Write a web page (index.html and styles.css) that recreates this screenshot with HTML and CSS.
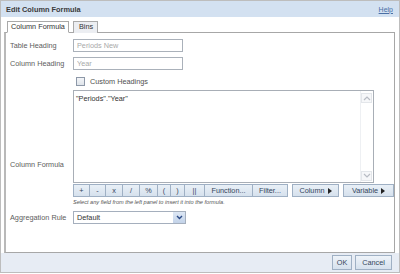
FILE: index.html
```html
<!DOCTYPE html>
<html lang="en">
  <head>
    <meta charset="UTF-8" />
    <title>Edit Column Formula</title>
    <link rel="stylesheet" href="styles.css">
  </head>
  <body>
    <div class="dialog">
      <div class="titlebar">
        <span class="title">Edit Column Formula</span>
        <a class="help" href="#">Help</a>
      </div>
      <div class="tabs">
        <span class="tab active">Column Formula</span>
        <span class="tab">Bins</span>
      </div>
      <div class="panel">
        <div class="row first">
          <span class="label">Table Heading</span>
          <input class="field" type="text" value="Periods New" />
        </div>
        <div class="row">
          <span class="label">Column Heading</span>
          <input class="field" type="text" value="Year" />
        </div>
        <div class="row check">
          <span class="label"></span>
          <input class="box" type="checkbox" />
          <span class="checktext">Custom Headings</span>
        </div>
        <div class="row formula">
          <span class="label formula-label">Column Formula</span>
          <div class="formula-col">
            <div class="textarea">
              <div class="text">"Periods"."Year"</div>
              <div class="scrollbar">
                <span class="arrow">
                  <svg width="8" height="6" viewBox="0 0 8 6"><path d="M1 5 L4 2 L7 5" fill="none" stroke="#b8bcc4" stroke-width="1.2"/></svg>
                </span>
                <span class="arrow">
                  <svg width="8" height="6" viewBox="0 0 8 6"><path d="M1 1 L4 4 L7 1" fill="none" stroke="#b8bcc4" stroke-width="1.2"/></svg>
                </span>
              </div>
            </div>
            <div class="ops">
              <button class="op w16">+</button>
              <button class="op w16">-</button>
              <button class="op w17">x</button>
              <button class="op w17">/</button>
              <button class="op w18">%</button>
              <button class="op w13">(</button>
              <button class="op w14">)</button>
              <button class="op w20">||</button>
              <button class="op w48">Function...</button>
              <button class="op w35">Filter...</button>
              <button class="op menu w47">Column <svg width="4" height="6" viewBox="0 0 4 6"><path d="M0 0 L4 3 L0 6 Z" fill="#222"/></svg></button>
              <button class="op menu w51">Variable <svg width="4" height="6" viewBox="0 0 4 6"><path d="M0 0 L4 3 L0 6 Z" fill="#222"/></svg></button>
            </div>
            <div class="hint">Select any field from the left panel to insert it into the formula.</div>
          </div>
        </div>
        <div class="row agg">
          <span class="label">Aggregation Rule</span>
          <div class="select">
            <span>Default</span>
            <span class="drop">
              <svg width="7" height="5" viewBox="0 0 7 5"><path d="M1 1 L3.5 3.5 L6 1" fill="none" stroke="#2b4a86" stroke-width="1.4"/></svg>
            </span>
          </div>
        </div>
      </div>
      <div class="footer">
        <button class="btn ok">OK</button>
        <button class="btn cancel">Cancel</button>
      </div>
    </div>
  </body>
</html>
```

FILE: styles.css
```css
* {
  margin: 0;
  padding: 0;
  box-sizing: border-box;
}
body {
  font-family: "Liberation Sans", Arial, sans-serif;
  font-size: 7.3px;
  color: #555;
  background: #fff;
}
.dialog {
  width: 400px;
  height: 273px;
  border: 1px solid #bdbdbd;
  display: flex;
  flex-direction: column;
}
/* thanh tiêu đề */
.titlebar {
  height: 16px;
  background: #d3e1f1;
  display: flex;
  justify-content: space-between;
  align-items: center;
  padding: 0 6px 0 5px;
}
.title {
  font-weight: bold;
  color: #3b3b3b;
  font-size: 7.4px;
}
.help {
  color: #4a6fa5;
  font-size: 7px;
}
/* tab */
.tabs {
  display: flex;
  gap: 4px;
  padding: 4px 0 0 6px;
  height: 16px;
  position: relative;
  z-index: 1;
}
.tab {
  height: 12px;
  line-height: 10px;
  padding: 0 3px;
  border: 1px solid #a9a9a9;
  border-bottom: none;
  background: #eceef2;
  color: #333;
}
.tab.active {
  background: #fff;
  height: 12px;
  width: 62px;
  border-bottom: 1px solid #fff;
}
.tab:last-child {
  width: 25px;
  padding-left: 5px;
}
.panel {
  height: 221px;
  margin: -1px 4px 0 3px;
  border: 1px solid #a7a7a7;
  border-left: 2px solid #b9b9b9;
  padding: 0 1px 0 4px;
}
.row {
  display: flex;
  align-items: center;
  margin-top: 5px;
}
.row.first {
  margin-top: 6px;
}
.label {
  width: 63px;
  flex: none;
  color: #5d5d5d;
}
.field {
  width: 110px;
  height: 13px;
  border: 1px solid #aab1ba;
  padding: 0 3px;
  font-family: inherit;
  font-size: 7.3px;
  color: #a9a9a9;
  outline: none;
}
.row.check {
  margin-top: 6px;
  height: 10px;
}
.box {
  appearance: none;
  width: 9px;
  height: 9px;
  border: 1px solid #8d98a8;
  background: linear-gradient(#f3f5f8, #dfe4ea);
  margin: 0 5px 0 3px;
}
.checktext {
  color: #4f4f4f;
}
.row.formula {
  align-items: flex-start;
  margin-top: 4px;
}
.formula-label {
  padding-top: 70px;
}
.formula-col {
  flex: 1;
}
.textarea {
  width: 301px;
  height: 93px;
  border: 1px solid #a8aeb6;
  display: flex;
}
.text {
  flex: 1;
  padding: 3px 2px;
  color: #333;
}
.scrollbar {
  width: 13px;
  border-left: 1px solid #eef0f3;
  display: flex;
  flex-direction: column;
  justify-content: space-between;
  padding: 2px 1px 1px 0;
}
.arrow {
  display: flex;
  align-items: center;
  justify-content: center;
  height: 10px;
  border: 1px solid #e3e6ea;
  background: #f6f7f9;
}
.ops {
  display: flex;
  margin-top: 1px;
}
.op {
  height: 13px;
  border: 1px solid #9fb0c4;
  background: linear-gradient(#e9f0f7, #d6e1ed);
  font-family: inherit;
  font-size: 7.3px;
  color: #34465c;
  margin-right: -1px;
}
.op.menu {
  display: flex;
  align-items: center;
  justify-content: center;
  gap: 3px;
}
.w13 { width: 14px; }
.w14 { width: 15px; }
.w16 { width: 17px; }
.w17 { width: 18px; }
.w18 { width: 19px; }
.w20 { width: 21px; }
.w35 { width: 36px; margin-right: 4px; }
.w47 { width: 47px; margin-right: 4px; }
.w48 { width: 49px; }
.w51 { width: 51px; }
.hint {
  font-style: italic;
  font-size: 5.6px;
  color: #555;
  margin-top: 2px;
  height: 8px;
}
.row.agg {
  margin-top: 4px;
}
.select {
  width: 113px;
  height: 13px;
  border: 1px solid #a5afbd;
  display: flex;
  align-items: center;
  justify-content: space-between;
  padding-left: 3px;
  color: #333;
}
.drop {
  width: 12px;
  height: 11px;
  background: linear-gradient(#dde7f4, #c3d3e9);
  display: flex;
  align-items: center;
  justify-content: center;
}
.footer {
  flex: 1;
  background: #e7ecf4;
  display: flex;
  justify-content: flex-end;
  align-items: center;
  gap: 3px;
  padding-right: 7px;
}
.btn {
  height: 15px;
  border: 1px solid #9fb0c4;
  background: linear-gradient(#eef3f9, #d6e1ed);
  font-family: inherit;
  font-size: 7.3px;
  color: #34465c;
}
.ok {
  width: 20px;
}
.cancel {
  width: 37px;
}
```
